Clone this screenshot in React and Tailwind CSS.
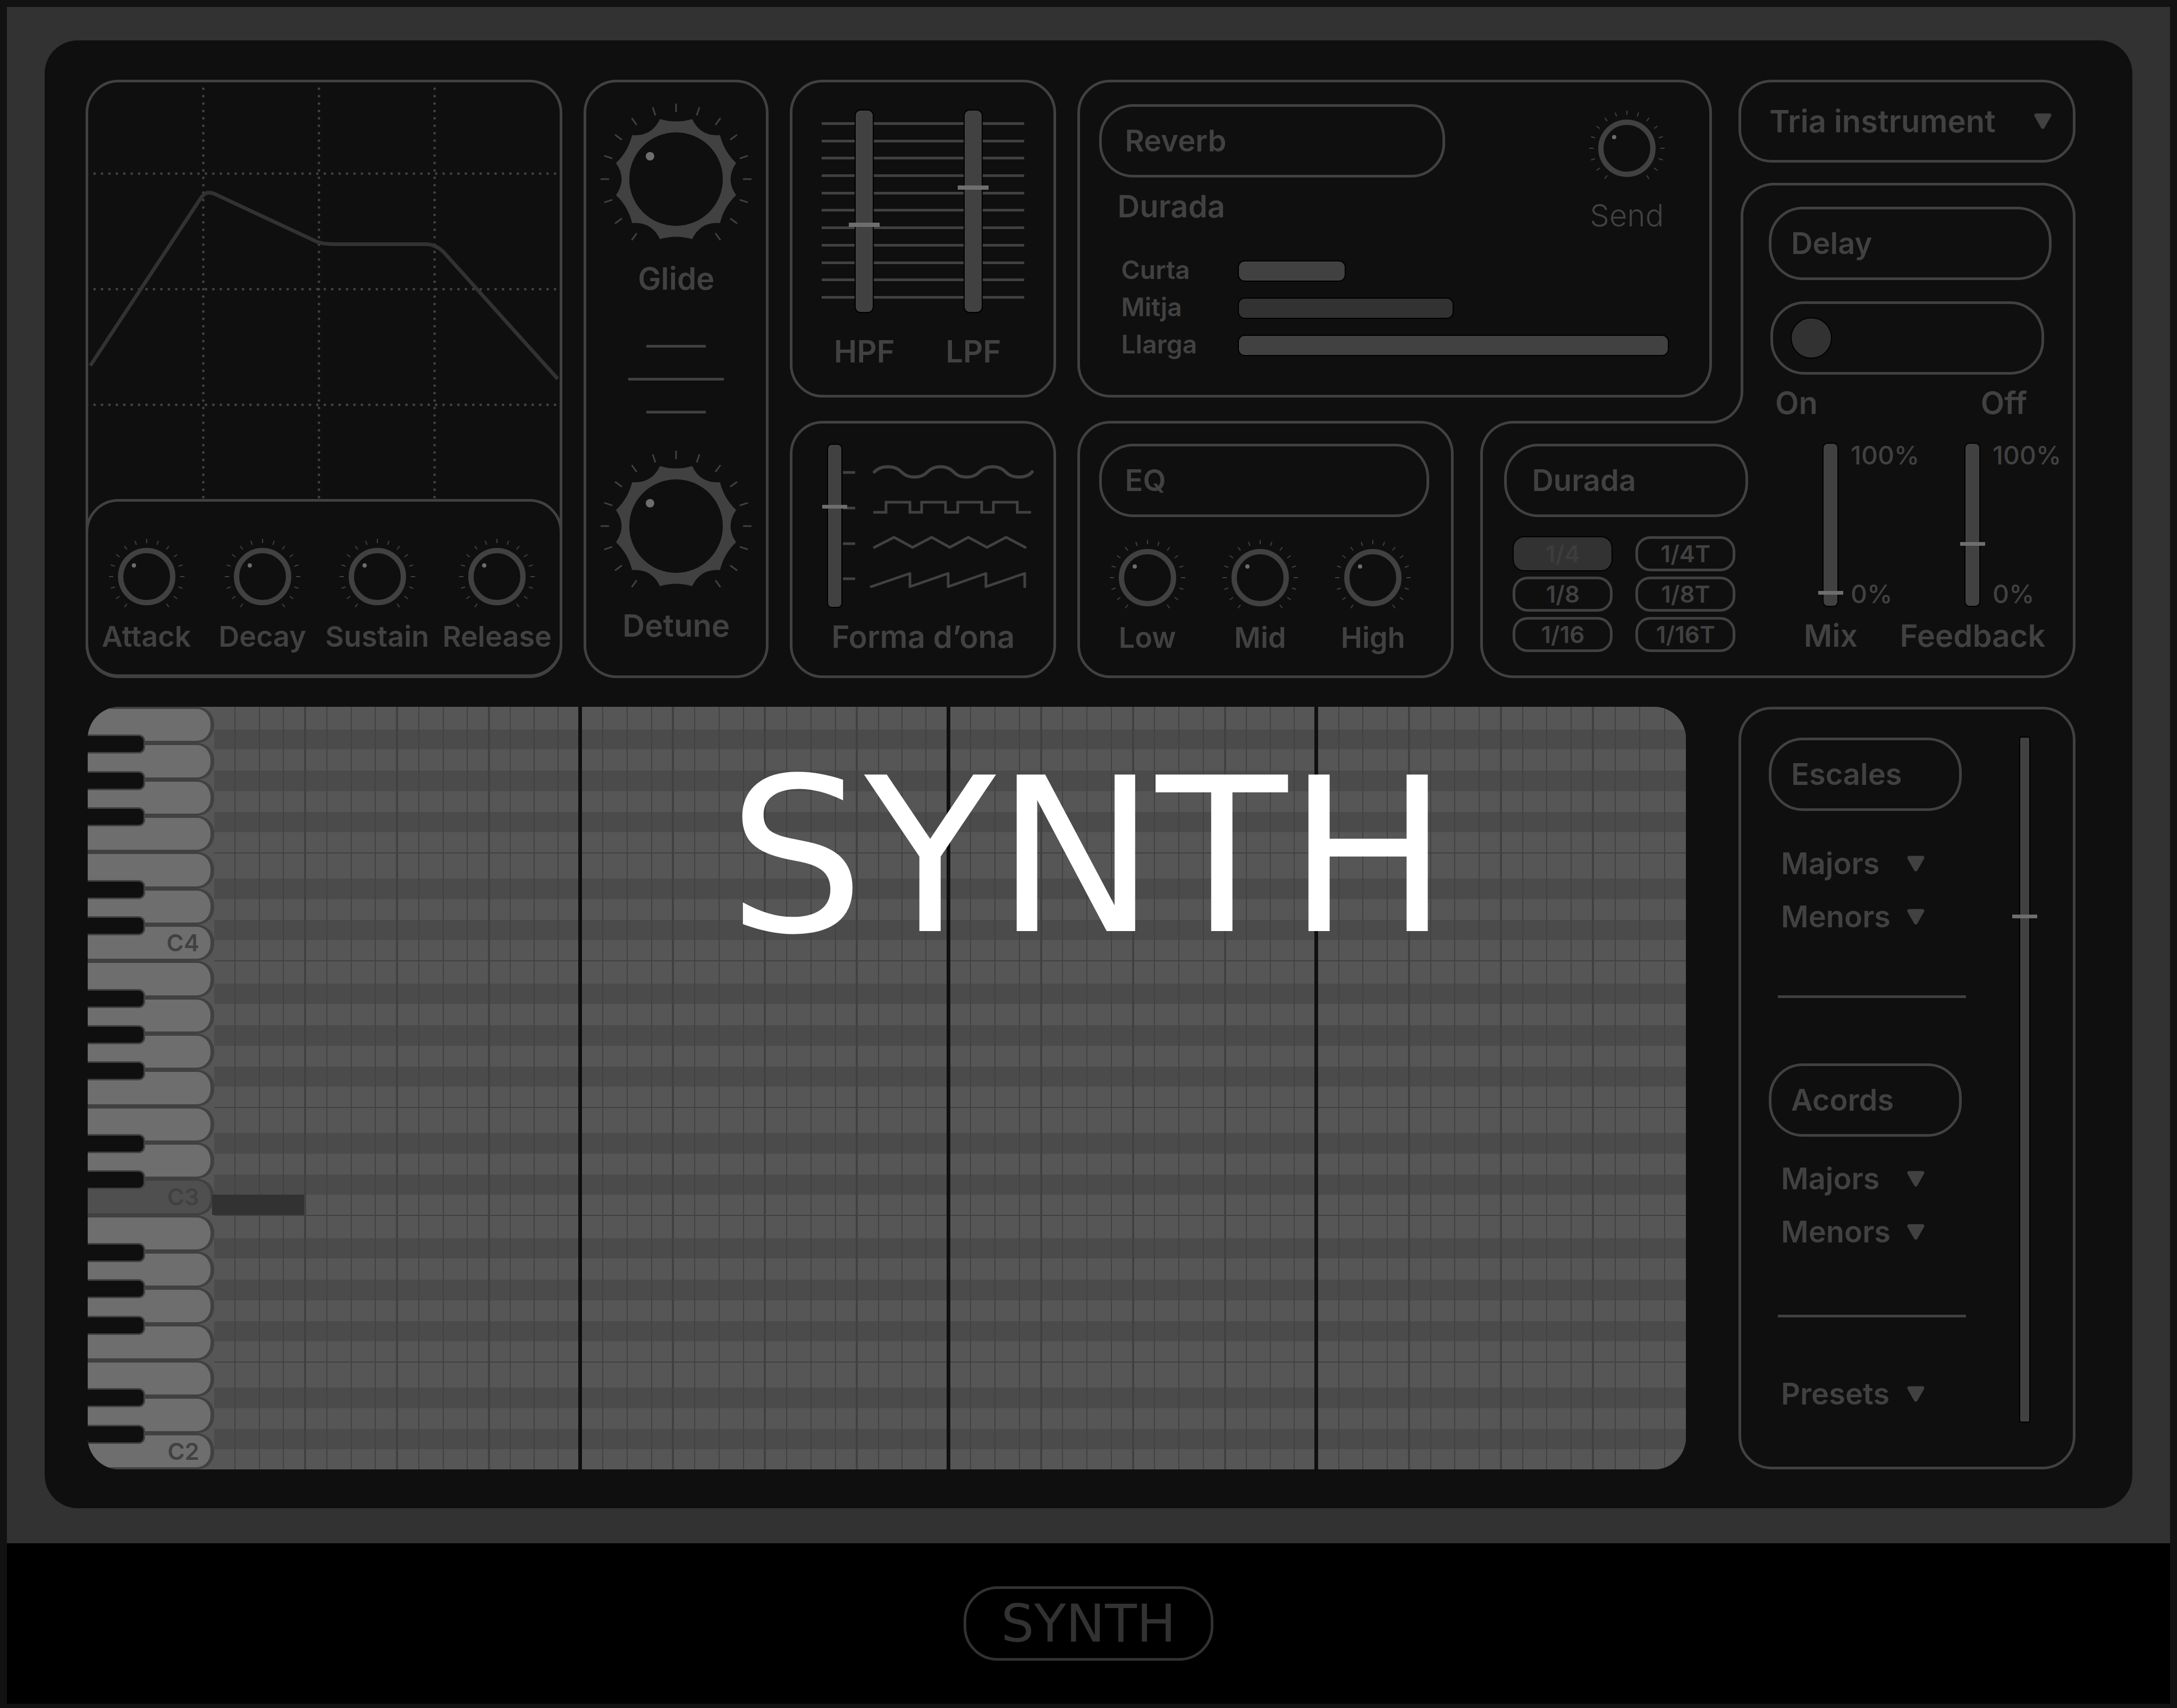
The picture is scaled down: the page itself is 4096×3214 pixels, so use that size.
import React from "react";

const TICKS = Array.from({ length: 17 }, (_, i) => -144 + i * 18);

function polar(radius, degrees) {
  const a = (degrees * Math.PI) / 180;
  return `${(radius * Math.cos(a)).toFixed(2)} ${(radius * Math.sin(a)).toFixed(2)}`;
}

// Scalloped rim with twelve points; every second hollow is deeper.
const RIM =
  `M${polar(117, -15)}` +
  Array.from({ length: 12 }, (_, i) => {
    const mid = i * 30;
    return `Q${polar(mid % 60 === 0 ? 92 : 104, mid)} ${polar(117, mid + 15)}`;
  }).join("") +
  "Z";

function Knob({ label, large = false, light = false }) {
  return (
    <label
      className={`relative flex flex-col items-center leading-[60px] ${
        large ? "gap-[12px] text-[58px]" : light ? "gap-[24px] text-[58px] font-light" : "gap-[11px] text-[54px]"
      }`}
    >
      {large ? (
        <svg viewBox="-145 -145 290 290" className="size-[290px]" aria-hidden="true">
          {TICKS.map((t) => (
            <line key={t} y1="-126" y2="-142" stroke="#414141" strokeWidth="3" transform={`rotate(${t})`} />
          ))}
          <path d={RIM} fill="#414141" />
          <circle r="88" fill="#0f0f0f" />
          <circle cx="-49" cy="-43" r="8" fill="#6e6e6e" />
        </svg>
      ) : (
        <svg viewBox="-72 -72 144 144" className="size-[144px]" aria-hidden="true">
          {TICKS.map((t) => (
            <line key={t} y1="-63" y2="-71" stroke="#414141" strokeWidth="2" transform={`rotate(${t})`} />
          ))}
          <circle r="49" fill="#0f0f0f" stroke="#414141" strokeWidth="10" />
          <circle cx="-24" cy="-21" r="4" fill="#6e6e6e" />
        </svg>
      )}
      {label}
      <input type="range" defaultValue="20" className="absolute inset-0 h-full w-full cursor-pointer opacity-0" />
    </label>
  );
}

const THUMBS = {
  wide: "w-[58px] [&::-webkit-slider-thumb]:h-[8px] [&::-webkit-slider-thumb]:w-[58px]",
  slim: "w-[47px] [&::-webkit-slider-thumb]:h-[7px] [&::-webkit-slider-thumb]:w-[47px]",
};

function Fader({ name, value, height, track, size = "slim" }) {
  return (
    <div className={`relative z-10 flex shrink-0 justify-center ${height} ${size === "wide" ? "w-[58px]" : "w-[47px]"}`}>
      <div className={`h-full bg-[#414141] ring-2 ring-black ${track}`} />
      <input
        type="range"
        aria-label={name}
        defaultValue={value}
        className={`absolute inset-0 h-full appearance-none bg-transparent [direction:rtl] [writing-mode:vertical-lr] [&::-webkit-slider-thumb]:appearance-none [&::-webkit-slider-thumb]:bg-[#6e6e6e] ${THUMBS[size]}`}
      />
    </div>
  );
}

function Arrow() {
  return (
    <svg viewBox="0 0 33 30" className="h-[30px] w-[33px] shrink-0" aria-hidden="true">
      <path d="M4 4H29L16.500 26Z" fill="#414141" stroke="#414141" strokeWidth="7" strokeLinejoin="round" />
    </svg>
  );
}

function Title({ children, className = "" }) {
  return (
    <h2 className={`flex h-[138px] items-center rounded-[64px] border-[5px] border-[#414141] text-[56px] leading-[60px] ${className}`}>
      {children}
    </h2>
  );
}

function Panel({ children, className = "" }) {
  return <section className={`rounded-[62px] border-[5px] border-[#414141] ${className}`}>{children}</section>;
}

function Envelope() {
  return (
    <Panel className="flex flex-col">
      <svg viewBox="5 5 889 786" className="block w-full overflow-visible" role="img" aria-label="ADSR">
        <g stroke="#414141" strokeWidth="5" strokeLinecap="round" strokeDasharray="0 14">
          <path d="M222 17V788M440 17V788M658 17V788" />
          <path d="M3 177H886M3 395H886M3 613H886" />
        </g>
        <path
          d="M9 539L216 225Q224 213 232 213Q238 213 245 216L435 305Q446 310 468 310H642Q660 310 675 325L890 564"
          fill="none"
          stroke="#323232"
          strokeWidth="7"
        />
      </svg>
      <div className="-mx-[5px] -mb-[5px] grid grid-cols-[220fr_218fr_216fr_237fr] rounded-[62px] border-[5px] border-[#414141] pt-[69px] pb-[41px]">
        <Knob label="Attack" />
        <Knob label="Decay" />
        <Knob label="Sustain" />
        <Knob label="Release" />
      </div>
    </Panel>
  );
}

function Pitch() {
  return (
    <Panel className="flex flex-col items-center pt-[37px]">
      <Knob large label="Glide" />
      <div className="flex flex-col items-center gap-[57px] pt-[95px] pb-[67px]" aria-hidden="true">
        <div className="h-[5px] w-[112px] bg-[#414141]" />
        <div className="h-[5px] w-[180px] bg-[#414141]" />
        <div className="h-[5px] w-[112px] bg-[#414141]" />
      </div>
      <Knob large label="Detune" />
    </Panel>
  );
}

function Filters() {
  return (
    <Panel className="grid h-[598px] grid-cols-1 content-start px-[55px] pt-[53px]">
      <div className="col-start-1 row-start-1 flex h-[379px] flex-col justify-between pt-[22px] pb-[25px]" aria-hidden="true">
        {Array.from({ length: 11 }, (_, i) => (
          <div key={i} className="h-[5px] bg-[#414141]" />
        ))}
      </div>
      <div className="col-start-1 row-start-1 flex justify-between pr-[67px] pl-[51px]">
        {[
          ["HPF", 43],
          ["LPF", 62],
        ].map(([name, value]) => (
          <div key={name} className="flex w-[58px] flex-col items-center gap-[44px]">
            <Fader name={name} value={value} size="wide" height="h-[379px]" track="w-[32px] rounded-[9px]" />
            <span className="text-[58px] leading-[60px]">{name}</span>
          </div>
        ))}
      </div>
    </Panel>
  );
}

function Waveform() {
  return (
    <Panel className="flex h-[484px] flex-col items-center gap-[26px] pt-[40px]">
      <div className="flex justify-center pl-[24px]">
        <Fader name="Forma d’ona" value={62} height="h-[305px]" track="w-[25px] rounded-[7px]" />
        <svg viewBox="0 0 364 305" className="-ml-[8px] h-[305px] w-[364px]" aria-hidden="true">
          <g fill="none" stroke="#414141" strokeWidth="5">
            <path d="M0 52H23M0 119H23M0 186H23M0 252H23" />
            <g strokeLinecap="round" strokeLinejoin="round">
              <path strokeWidth="6" d="M59 51C71 38 98 38 110 51S147 64 159 51S196 38 208 51S245 64 257 51S294 38 306 51S345 64 356 51" />
              <path strokeLinecap="butt" strokeLinejoin="miter" d="M57 127H81V108H126V127H148V108H193V127H216V108H261V127H283V108H328V127H354" />
              <path d="M59 193L96 174L131 193L167 174L201 193L236 174L271 193L307 174L343 193" />
              <path d="M53 267L126 242V267L198 242V267L269 242V267L342 242V267" />
            </g>
          </g>
        </svg>
      </div>
      <span className="text-[58px] leading-[60px]">Forma d’ona</span>
    </Panel>
  );
}

const LENGTHS = [
  ["Curta", "w-1/4 bg-[#414141]"],
  ["Mitja", "w-1/2 bg-[#323232]"],
  ["Llarga", "w-full bg-[#414141]"],
];

function Reverb() {
  return (
    <Panel className="col-span-2 col-start-1 row-span-2 row-start-1 mb-[44px] pt-[41px] pr-[76px] pl-[36px]">
      <div className="flex items-start justify-between">
        <div>
          <Title className="w-[651px] pl-[43px]">Reverb</Title>
          <h3 className="mt-[24px] pl-[34px] text-[58px] leading-[60px]">Durada</h3>
        </div>
        <div className="pt-[11px] pr-[7px]">
          <Knob light label="Send" />
        </div>
      </div>
      <div className="mt-[55px] flex flex-col gap-[30px] pl-[41px] text-[48px]">
        {LENGTHS.map(([name, bar]) => (
          <button key={name} type="button" className="flex h-[40px] items-center text-left">
            <span className="w-[220px] shrink-0 pb-[4px] leading-[44px]">{name}</span>
            <span className="block h-full flex-1">
              <span className={`block h-full rounded-[13px] border-2 border-black ${bar}`} />
            </span>
          </button>
        ))}
      </div>
    </Panel>
  );
}

function Equalizer() {
  return (
    <Panel className="col-start-1 row-start-3 pt-[38px] pr-[41px] pl-[20px]">
      <Title className="ml-[16px] pl-[43px]">EQ</Title>
      <div className="grid grid-cols-3 pt-[42px]">
        <Knob label="Low" />
        <Knob label="Mid" />
        <Knob label="High" />
      </div>
    </Panel>
  );
}

function Instrument() {
  return (
    <Panel className="relative col-start-3 row-start-1 flex h-[156px] items-center">
      <select
        aria-label="Tria instrument"
        className="h-full w-full appearance-none rounded-[58px] bg-transparent pl-[53px] text-[58px]"
      >
        <option>Tria instrument</option>
      </select>
      <span className="pointer-events-none absolute right-[40px]">
        <Arrow />
      </span>
    </Panel>
  );
}

function DelayHead() {
  return (
    <section className="relative col-start-3 row-start-2 mt-[38px] ml-[4px] pt-[45px] pr-[45px] pl-[53px]">
      <span className="absolute inset-x-0 top-0 bottom-[55px] rounded-t-[62px] border-[5px] border-b-0 border-[#414141]" />
      <span className="absolute right-0 bottom-0 h-[55px] border-r-[5px] border-[#414141]" />
      <span className="absolute -bottom-[5px] -left-[55px] size-[60px] rounded-br-[60px] border-r-[5px] border-b-[5px] border-[#414141]" />
      <Title className="relative pl-[37px]">Delay</Title>
      <button
        type="button"
        role="switch"
        aria-checked="true"
        aria-label="Delay"
        className="relative mt-[40px] ml-[3px] flex h-[138px] w-[515px] items-center rounded-[64px] border-[5px] border-[#414141] pl-[33px]"
      >
        <span className="size-[78px] rounded-full border-2 border-black bg-[#323232]" />
      </button>
      <div className="relative mt-[23px] flex w-[486px] justify-between pl-[12px] text-[58px] leading-[60px]">
        <span>On</span>
        <span>Off</span>
      </div>
    </section>
  );
}

function DelayFader({ name, value }) {
  return (
    <div className="grid grid-cols-[47px_128px] content-start gap-x-[14px] gap-y-[26px]">
      <Fader name={name} value={value} height="h-[305px]" track="w-[26px] rounded-[8px]" />
      <div className="flex flex-col justify-between text-[48px] leading-[44px] font-medium">
        <span>100%</span>
        <span>0%</span>
      </div>
      <span className="justify-self-center text-[58px] leading-[60px]">{name}</span>
    </div>
  );
}

function DelayBody() {
  return (
    <section className="relative col-span-2 col-start-2 row-start-3 flex h-[484px] justify-between pt-[43px] pr-[28px] pl-[45px]">
      <span className="absolute inset-y-0 right-[685px] left-0 rounded-l-[62px] border-[5px] border-r-0 border-[#414141]" />
      <span className="absolute inset-y-0 right-0 w-[685px] rounded-br-[62px] border-r-[5px] border-b-[5px] border-[#414141]" />
      <div className="relative w-[459px]">
        <Title className="pl-[47px]">Durada</Title>
        <div className="grid grid-cols-2 gap-x-[43px] gap-y-[10px] pt-[36px] pr-[24px] pl-[16px] text-[44px] leading-[44px]">
          <button type="button" aria-pressed="true" className="h-[66px] rounded-[22px] border-2 border-black bg-[#323232] text-[#3d3d3d]">
            1/4
          </button>
          {["1/4T", "1/8", "1/8T", "1/16", "1/16T"].map((step) => (
            <button key={step} type="button" className="h-[66px] rounded-[28px] border-[5px] border-[#414141]">
              {step}
            </button>
          ))}
        </div>
      </div>
      <div className="relative flex gap-[78px]">
        <DelayFader name="Mix" value={7} />
        <DelayFader name="Feedback" value={38} />
      </div>
    </section>
  );
}

// Pitches of one octave from the top down, with the relative height of each lane.
const LANES = [
  ["B", 45],
  ["A#", 40],
  ["A", 42],
  ["G#", 41],
  ["G", 42],
  ["F#", 40],
  ["F", 40],
  ["E", 50],
  ["D#", 41],
  ["D", 42],
  ["C#", 40],
  ["C", 40],
];
const WHITE = ["B", "A", "G", "F", "E", "D", "C"];
const OCTAVES = [4, 3, 2];

function PianoKeys() {
  return (
    <div className="flex w-[238px] shrink-0 flex-col">
      {OCTAVES.map((octave) =>
        WHITE.map((note) => {
          const playing = octave === 3 && note === "C";
          return (
            <div key={note + octave} className="relative flex-1">
              <button
                type="button"
                aria-label={note + octave}
                className={`flex h-full w-full items-center justify-end rounded-r-[32px] border-y-4 border-r-[7px] border-[#414141] pr-[21px] text-[44px] leading-[44px] ${
                  playing ? "bg-[#4f4f4f]" : "bg-[#6e6e6e]"
                }`}
              >
                {note === "C" ? `C${octave}` : ""}
              </button>
              {note !== "F" && note !== "C" && (
                <button
                  type="button"
                  aria-label={`${note}♭${octave}`}
                  className="absolute -bottom-[20px] left-0 z-10 h-[36px] w-[108px] rounded-r-[12px] border-[3px] border-l-0 border-[#414141] bg-[#0f0f0f]"
                />
              )}
            </div>
          );
        })
      )}
    </div>
  );
}

function PianoRoll() {
  return (
    <section className="ml-[4px] flex min-w-0 flex-1 overflow-hidden rounded-[60px] bg-[#565656]">
      <PianoKeys />
      <div className="grid flex-1 grid-cols-1 grid-rows-1">
        <div className="col-start-1 row-start-1 flex flex-col">
          {OCTAVES.map((octave) =>
            LANES.map(([note, weight]) => (
              <div
                key={note + octave}
                style={{ flexGrow: weight }}
                className={`relative basis-0 ${note.length > 1 ? "bg-[#4b4b4b]" : "bg-[#565656]"} ${
                  (note === "F" || note === "C") && note + octave !== "C2" ? "border-b-2 border-[#414141]" : ""
                }`}
              >
                {note + octave === "C3" && <div className="absolute inset-y-0 -left-[4px] z-10 w-1/16 bg-[#323232]" />}
              </div>
            ))
          )}
        </div>
        <div className="relative col-start-1 row-start-1 grid grid-cols-16" aria-hidden="true">
          {Array.from({ length: 16 }, (_, i) => (
            <div
              key={i}
              className={`grid grid-cols-[40fr_46fr_46fr_38fr] ${
                i === 15 ? "" : i % 4 === 3 ? "border-r-[7px] border-[#0f0f0f]" : "border-r-4 border-[#414141]"
              }`}
            >
              <div className="border-r-2 border-[#424242]" />
              <div className="border-r-2 border-[#424242]" />
              <div className="border-r-2 border-[#424242]" />
            </div>
          ))}
        </div>
      </div>
    </section>
  );
}

function MenuButton({ children }) {
  return (
    <button type="button" className="ml-[23px] flex w-[270px] items-center justify-between text-[56px] leading-[60px]">
      {children}
      <Arrow />
    </button>
  );
}

function Library() {
  return (
    <Panel className="flex w-[634px] shrink-0 items-start justify-between pt-[53px] pr-[67px] pb-[85px] pl-[52px]">
      <div className="w-[363px]">
        <Title className="pl-[37px]">Escales</Title>
        <div className="flex flex-col gap-[40px] pt-[69px] pb-[118px]">
          <MenuButton>Majors</MenuButton>
          <MenuButton>Menors</MenuButton>
        </div>
        <hr className="mr-[-8px] ml-[17px] border-t-[5px] border-[#414141]" />
        <Title className="mt-[123px] pl-[37px]">Acords</Title>
        <div className="flex flex-col gap-[40px] pt-[49px] pb-[126px]">
          <MenuButton>Majors</MenuButton>
          <MenuButton>Menors</MenuButton>
        </div>
        <hr className="mr-[-8px] mb-[114px] ml-[17px] border-t-[5px] border-[#414141]" />
        <MenuButton>Presets</MenuButton>
      </div>
      <Fader name="Presets" value={74} height="h-[1287px]" track="w-[17px] rounded-[2px]" />
    </Panel>
  );
}

export default function App() {
  return (
    <main className="flex min-h-screen flex-col bg-[#121212] px-[13px] pt-[13px] pb-[8px] font-['Inter',sans-serif] font-semibold whitespace-nowrap text-[#414141]">
      <div className="bg-[#323232] px-[71px] pt-[63px] pb-[66px]">
        <div className="relative rounded-[62px] bg-[#0f0f0f] pt-[74px] pr-[107px] pb-[73px] pl-[77px]">
          <div className="grid grid-cols-[897fr_348fr_501fr_1877fr] gap-[40px]">
            <Envelope />
            <Pitch />
            <div className="flex flex-col gap-[44px]">
              <Filters />
              <Waveform />
            </div>
            <div className="grid grid-cols-[707fr_435fr_634px] grid-rows-[156px_486px_484px] gap-x-[50px]">
              <Reverb />
              <Instrument />
              <DelayHead />
              <Equalizer />
              <DelayBody />
            </div>
          </div>
          <div className="mt-[54px] flex h-[1435px] items-stretch gap-[99px]">
            <PianoRoll />
            <Library />
          </div>
          <h1 className="pointer-events-none absolute inset-x-0 top-[1334px] z-20 text-center font-['DejaVu_Sans',sans-serif] text-[404px] leading-[404px] font-normal text-white">
            SYNTH
          </h1>
        </div>
      </div>
      <footer className="flex flex-1 items-center justify-center bg-black text-[#323232]">
        <div className="flex h-[140px] w-[470px] items-center justify-center rounded-[64px] border-[5px] border-[#323232] font-['DejaVu_Sans',sans-serif] text-[98px] leading-[98px] font-normal">
          SYNTH
        </div>
      </footer>
    </main>
  );
}
